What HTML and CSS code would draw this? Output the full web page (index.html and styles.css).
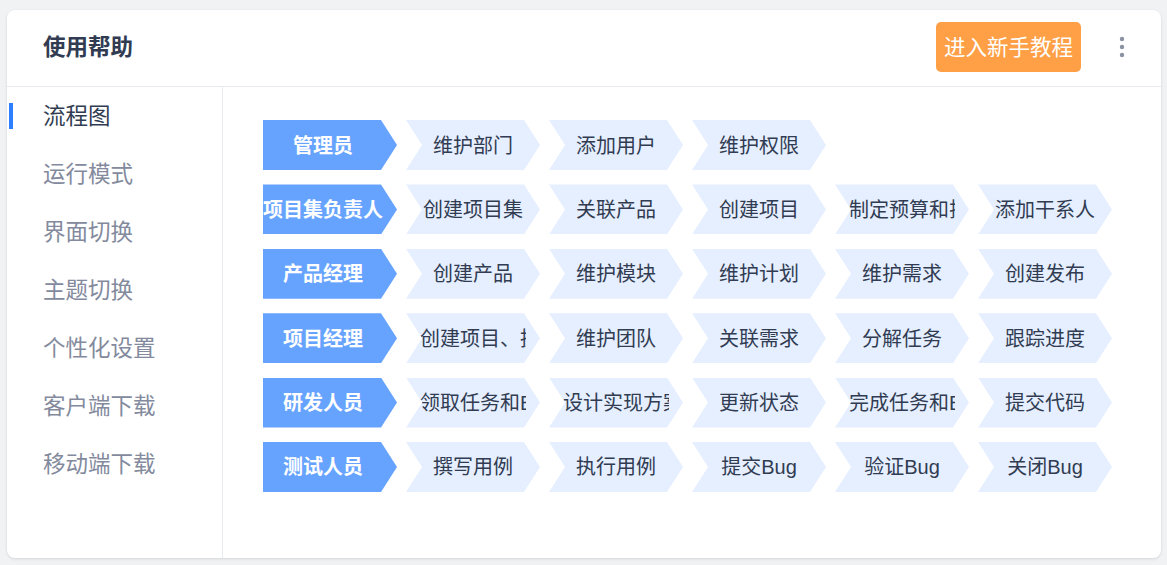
FILE: index.html
```html
<!DOCTYPE html>
<html lang="zh-CN">
<head>
<meta charset="utf-8">
<title>使用帮助</title>
<link rel="stylesheet" href="styles.css">
</head>
<body>
<div class="card">
  <div class="header">
    <div class="title">使用帮助</div>
    <div class="actions">
      <button class="btn-tutorial">进入新手教程</button>
      <button class="btn-more" aria-label="更多">
        <svg width="6" height="22" viewBox="0 0 6 22"><circle cx="3" cy="3" r="2.2" fill="#8a91a3"/><circle cx="3" cy="11" r="2.2" fill="#8a91a3"/><circle cx="3" cy="19" r="2.2" fill="#8a91a3"/></svg>
      </button>
    </div>
  </div>
  <div class="body">
    <ul class="side">
      <li class="side-item active">流程图</li>
      <li class="side-item">运行模式</li>
      <li class="side-item">界面切换</li>
      <li class="side-item">主题切换</li>
      <li class="side-item">个性化设置</li>
      <li class="side-item">客户端下载</li>
      <li class="side-item">移动端下载</li>
    </ul>
    <div class="content">
      <div class="flow-row">
        <div class="chev role"><span>管理员</span></div>
        <div class="chev"><span>维护部门</span></div>
        <div class="chev"><span>添加用户</span></div>
        <div class="chev"><span>维护权限</span></div>
      </div>
      <div class="flow-row">
        <div class="chev role"><span>项目集负责人</span></div>
        <div class="chev"><span>创建项目集</span></div>
        <div class="chev"><span>关联产品</span></div>
        <div class="chev"><span>创建项目</span></div>
        <div class="chev"><span>制定预算和排期</span></div>
        <div class="chev"><span>添加干系人</span></div>
      </div>
      <div class="flow-row">
        <div class="chev role"><span>产品经理</span></div>
        <div class="chev"><span>创建产品</span></div>
        <div class="chev"><span>维护模块</span></div>
        <div class="chev"><span>维护计划</span></div>
        <div class="chev"><span>维护需求</span></div>
        <div class="chev"><span>创建发布</span></div>
      </div>
      <div class="flow-row">
        <div class="chev role"><span>项目经理</span></div>
        <div class="chev"><span>创建项目、执行</span></div>
        <div class="chev"><span>维护团队</span></div>
        <div class="chev"><span>关联需求</span></div>
        <div class="chev"><span>分解任务</span></div>
        <div class="chev"><span>跟踪进度</span></div>
      </div>
      <div class="flow-row">
        <div class="chev role"><span>研发人员</span></div>
        <div class="chev"><span>领取任务和Bug</span></div>
        <div class="chev"><span>设计实现方案</span></div>
        <div class="chev"><span>更新状态</span></div>
        <div class="chev"><span>完成任务和Bug</span></div>
        <div class="chev"><span>提交代码</span></div>
      </div>
      <div class="flow-row">
        <div class="chev role"><span>测试人员</span></div>
        <div class="chev"><span>撰写用例</span></div>
        <div class="chev"><span>执行用例</span></div>
        <div class="chev"><span>提交Bug</span></div>
        <div class="chev"><span>验证Bug</span></div>
        <div class="chev"><span>关闭Bug</span></div>
      </div>
    </div>
  </div>
</div>
</body>
</html>
```
FILE: styles.css
```css
* { box-sizing: border-box; }
html, body { height: 100%; }
body {
  margin: 0;
  padding: 10px 6px 7px 7px;
  background: #f1f2f4;
  font-family: "Liberation Sans", "Noto Sans CJK SC", sans-serif;
  color: #313c52;
}
.card {
  height: 548px;
  background: #fff;
  border-radius: 8px;
  box-shadow: 0 1px 3px rgba(0, 0, 0, 0.12);
  display: flex;
  flex-direction: column;
  overflow: hidden;
}
.header {
  height: 77px;
  flex: none;
  display: flex;
  align-items: center;
  justify-content: space-between;
  padding: 0 27px 0 36px;
  border-bottom: 1px solid #e8ebf0;
}
.title {
  font-size: 22.5px;
  font-weight: 700;
  color: #313c52;
  margin-top: -6px;
}
.actions {
  display: flex;
  align-items: center;
  gap: 29px;
  margin-top: -3px;
}
.btn-tutorial {
  height: 50px;
  width: 145px;
  border: none;
  border-radius: 5px;
  background: #ff9f46;
  color: #fff;
  font-family: inherit;
  font-size: 21.5px;
  padding: 0 0 2px;
  cursor: pointer;
}
.btn-more {
  border: none;
  background: transparent;
  width: 24px;
  height: 30px;
  padding: 0;
  display: flex;
  align-items: center;
  justify-content: center;
  cursor: pointer;
}
.body {
  flex: 1;
  display: flex;
  min-height: 0;
}
.side {
  list-style: none;
  margin: 0;
  padding: 0 0 0 2px;
  width: 216px;
  flex: none;
  border-right: 1px solid #e8ebf0;
}
.side-item {
  height: 58px;
  display: flex;
  align-items: center;
  padding-bottom: 4px;
  font-size: 22.5px;
  color: #838a9d;
}
.side-item::before {
  content: "";
  width: 4px;
  height: 26px;
  margin: 4px 30px 0 0;
  background: transparent;
}
.side-item.active { color: #313c52; }
.side-item.active::before { background: #2e7fff; }
.content {
  flex: 1;
  padding: 33px 0 0 40px;
  display: flex;
  flex-direction: column;
  gap: 14.4px;
}
.flow-row {
  display: flex;
  gap: 9px;
}
.chev {
  width: 134px;
  height: 50px;
  flex: none;
  display: flex;
  align-items: center;
  padding: 0 14px 2px;
  background: #e6efff;
  font-size: 20px;
  color: #313c52;
  clip-path: polygon(0 0, calc(100% - 16px) 0, 100% 50%, calc(100% - 16px) 100%, 0 100%, 16px 50%);
}
.chev span {
  flex: 1;
  min-width: 0;
  overflow: hidden;
  white-space: nowrap;
  text-align: center;
}
.chev.role {
  padding: 0 14px 2px 0;
  background: #66a3ff;
  color: #fff;
  font-weight: 700;
  clip-path: polygon(0 0, calc(100% - 16px) 0, 100% 50%, calc(100% - 16px) 100%, 0 100%);
}
```
